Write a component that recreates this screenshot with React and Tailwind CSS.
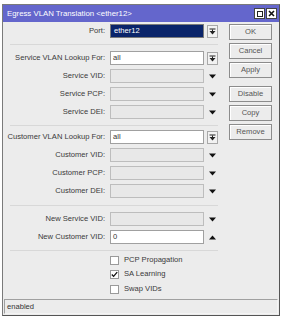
import React from "react";

const font = { fontFamily: '"Liberation Sans", Arial, sans-serif' };

function DropBtn() {
  return (
    <div className="ml-[3px] w-[11px] h-[13px] border border-[#a8a8a8] bg-[#f2f2f2] flex items-center justify-center">
      <svg width="7" height="7" viewBox="0 0 7 7">
        <rect x="0.5" y="0.5" width="6" height="1" fill="#222" />
        <path d="M0.5 3 H6.5 L3.5 6.5 Z" fill="#222" />
        <rect x="3" y="1.5" width="1" height="2" fill="#222" />
      </svg>
    </div>
  );
}

function Tri({ up }) {
  return (
    <div className="ml-[3px] w-[11px] h-[13px] flex items-center justify-center">
      <svg width="7" height="5" viewBox="0 0 7 5">
        {up ? (
          <path d="M0 4.5 H7 L3.5 0.5 Z" fill="#111" />
        ) : (
          <path d="M0 0.5 H7 L3.5 4.5 Z" fill="#111" />
        )}
      </svg>
    </div>
  );
}

function Row({ label, value, kind = "disabled", btn = "tri", up, mt = "mt-[4px]", selected }) {
  let box;
  if (selected) {
    box = "bg-[#0a246a] border-[#7a7a7a] text-white";
  } else if (kind === "enabled") {
    box = "bg-white border-[#a0a0a0] text-[#333]";
  } else {
    box = "bg-[#e8e8e8] border-[#bdbdbd] text-[#333]";
  }
  return (
    <div className={`flex items-center h-[14px] ${mt}`}>
      <div className="w-[103px] text-right text-[7.6px] text-[#3a3a3a] leading-none pr-[1px]">{label}</div>
      <div className={`ml-[4px] w-[94px] h-[14px] border ${box} flex items-center`}>
        {selected ? (
          <span className="ml-[2px] px-[1px] bg-[#0a246a] text-[7.6px] leading-none">{value}</span>
        ) : (
          <span className="ml-[2px] text-[7.6px] leading-none">{value}</span>
        )}
      </div>
      {btn === "drop" ? <DropBtn /> : <Tri up={up} />}
    </div>
  );
}

function Sep({ mt, mb }) {
  return <div className={`ml-[7px] w-[208px] h-px bg-[#d8d8d8] ${mt} ${mb}`} />;
}

function Btn({ children, mt }) {
  return (
    <div className={`w-[43px] h-[16px] border border-[#8c8c8c] bg-[#ececec] flex items-center justify-center text-[7.6px] text-[#555] leading-none shadow-[inset_1px_1px_0_#fff] ${mt}`}>
      {children}
    </div>
  );
}

function Check({ label, checked, mt = "" }) {
  return (
    <div className={`flex items-center h-[14px] ${mt}`}>
      <div className="ml-[107px] w-[9px] h-[9px] border border-[#9a9a9a] bg-white flex items-center justify-center">
        {checked && (
          <svg width="7" height="7" viewBox="0 0 7 7">
            <path d="M0.8 3.5 L2.6 5.4 L6.2 1.2" stroke="#111" strokeWidth="1.3" fill="none" />
          </svg>
        )}
      </div>
      <span className="ml-[5px] text-[7.6px] text-[#3a3a3a] leading-none">{label}</span>
    </div>
  );
}

export default function App() {
  return (
    <div className="w-[283px] h-[320px] bg-white pt-[4px] pl-[2px]" style={font}>
      <div className="w-[278px] h-[312px] border border-[#7a7a7a] border-r-[#555] border-b-[#555] bg-[#ececec] flex flex-col">
        <div className="h-[17px] bg-[#6466cc] flex items-center pl-[4px] pr-[2px]">
          <span className="text-white text-[7.8px] leading-none">Egress VLAN Translation &lt;ether12&gt;</span>
          <div className="ml-auto flex gap-[1px]">
            <div className="w-[11px] h-[11px] bg-white border border-[#444] flex items-center justify-center">
              <div className="w-[6px] h-[6px] border border-[#222]" />
            </div>
            <div className="w-[11px] h-[11px] bg-white border border-[#444] flex items-center justify-center">
              <svg width="7" height="7" viewBox="0 0 7 7">
                <path d="M1 1 L6 6 M6 1 L1 6" stroke="#111" strokeWidth="1.6" />
              </svg>
            </div>
          </div>
        </div>
        <div className="flex flex-1">
          <div className="w-[226px] flex flex-col">
            <Row label="Port:" value="ether12" selected btn="drop" mt="mt-[2px]" />
            <Sep mt="mt-[6px]" mb="mb-[2px]" />
            <Row label="Service VLAN Lookup For:" value="all" kind="enabled" btn="drop" />
            <Row label="Service VID:" />
            <Row label="Service PCP:" />
            <Row label="Service DEI:" />
            <Sep mt="mt-[6px]" mb="mb-[0px]" />
            <Row label="Customer VLAN Lookup For:" value="all" kind="enabled" btn="drop" />
            <Row label="Customer VID:" />
            <Row label="Customer PCP:" />
            <Row label="Customer DEI:" />
            <Sep mt="mt-[7px]" mb="mb-[2px]" />
            <Row label="New Service VID:" />
            <Row label="New Customer VID:" value="0" kind="enabled" up />
            <Sep mt="mt-[6px]" mb="mb-[2px]" />
            <Check label="PCP Propagation" />
            <Check label="SA Learning" checked />
            <Check label="Swap VIDs" mt="mt-px" />
          </div>
          <div className="flex flex-col">
            <Btn mt="mt-[2px]">OK</Btn>
            <Btn mt="mt-[3px]">Cancel</Btn>
            <Btn mt="mt-[3px]">Apply</Btn>
            <Btn mt="mt-[8px]">Disable</Btn>
            <Btn mt="mt-[3px]">Copy</Btn>
            <Btn mt="mt-[3px]">Remove</Btn>
          </div>
        </div>
        <div className="h-[15px] mx-[1px] mb-[1px] border border-[#a0a0a0] border-b-[#f4f4f4] border-r-[#f4f4f4] flex items-center pl-[2px] text-[7.6px] text-[#333] leading-none">
          enabled
        </div>
      </div>
    </div>
  );
}
